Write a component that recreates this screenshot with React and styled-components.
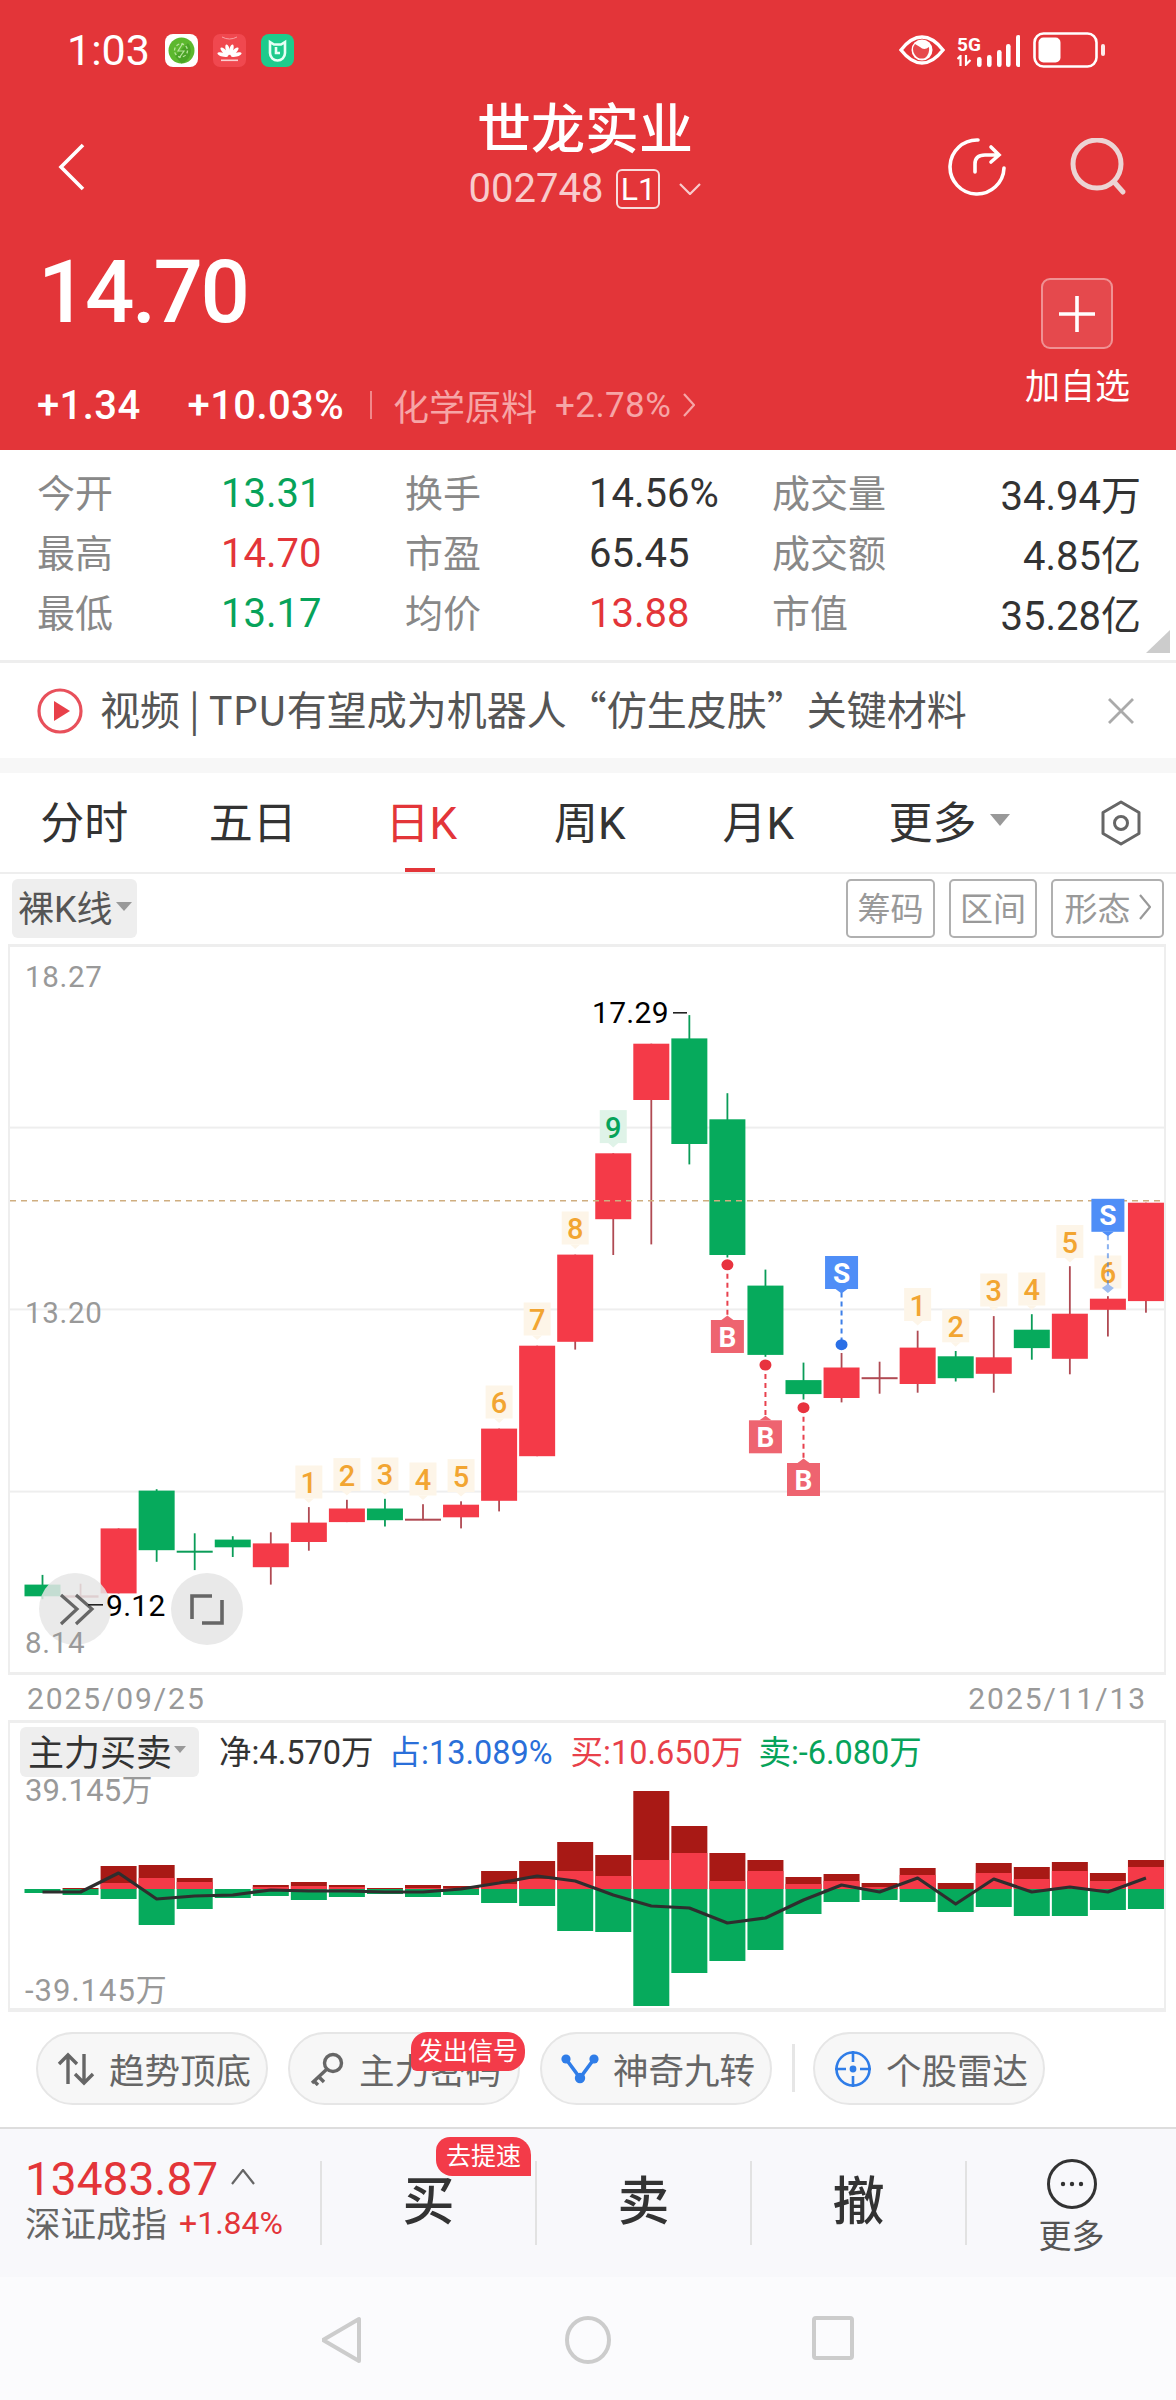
import React from 'react'
import styled, { createGlobalStyle } from 'styled-components'

const RED = '#e33539'
const GREEN = '#07a35a'
const CANDLE_RED = '#f43a48'
const CANDLE_GREEN = '#06aa5c'
const FONT = 'Roboto, "Noto Sans CJK SC", sans-serif'
const CJK_FIRST = '"Noto Sans CJK SC", Roboto, sans-serif'

const GlobalStyle = createGlobalStyle`
  html, body {
    margin: 0;
    padding: 0;
    background: #fff;
    font-family: ${FONT};
  }
  * { box-sizing: border-box; }
`

const Page = styled.div`
  width: 1176px;
  height: 2400px;
  background: #fff;
  overflow: hidden;
  color: #333;
`

/* red header */
const Header = styled.header`
  height: 450px;
  background: ${RED};
  color: #fff;
`

const StatusBar = styled.div`
  height: 100px;
  display: flex;
  align-items: center;
  padding: 0 71px 0 67px;
`

const Clock = styled.span`
  font-size: 43px;
  line-height: 42px;
  width: 98px;
`

const StatusApps = styled.div`
  display: flex;
  gap: 15px;
`

const StatusRight = styled.div`
  margin-left: auto;
  display: flex;
  align-items: center;
`

const NetLabel = styled.div`
  display: flex;
  flex-direction: column;
  width: 18px;
  margin-left: 12px;
`

const NetText = styled.span`
  font-size: 19px;
  line-height: 20px;
  font-weight: 700;
  white-space: nowrap;
`

const BarsSlot = styled.div`
  display: flex;
  margin-right: 13px;
`

const NavRow = styled.div`
  height: 130px;
  display: grid;
  grid-template-columns: 300px 1fr 300px;
  align-items: center;
`

const BackButton = styled.div`
  padding-left: 58px;
  display: flex;
  padding-top: 2px;
`

const TitleBlock = styled.div`
  display: flex;
  flex-direction: column;
  align-items: center;
  padding: 0 6px 20px 0;
`

const Title = styled.div`
  font-size: 54px;
  line-height: 62px;
  font-weight: 500;
`

const CodeRow = styled.div`
  display: flex;
  align-items: center;
  margin-top: 5px;
  color: #f8cbcc;
  font-size: 40px;
  line-height: 44px;
  gap: 13px;
`

const LevelBox = styled.span`
  border: 2px solid #f8dcdc;
  border-radius: 6px;
  font-size: 32px;
  line-height: 36px;
  height: 40px;
  width: 44px;
  margin-right: 6px;
  text-align: center;
  color: #fff;
`

const NavIcons = styled.div`
  display: flex;
  justify-content: flex-end;
  gap: 64px;
  padding-right: 48px;
  padding-top: 2px;
`

const QuoteRow = styled.div`
  height: 220px;
  display: flex;
  justify-content: space-between;
  padding: 0 46px 0 37px;
`

const QuoteLeft = styled.div`
  display: flex;
  flex-direction: column;
`

const Price = styled.div`
  font-size: 87px;
  line-height: 90px;
  font-weight: 500;
  letter-spacing: -2.5px;
  margin: 17px 0 0 1px;
`

const ChangeRow = styled.div`
  display: flex;
  align-items: center;
  margin-top: 50px;
  height: 36px;
`

const ChangeValue = styled.span`
  font-size: 40px;
  font-weight: 500;
  letter-spacing: 0.4px;
  margin-right: ${p => p.$gap}px;
`

const ChangeSplit = styled.span`
  width: 2px;
  height: 28px;
  margin: 0 21px 0 26px;
  background: #f1888a;
`

const SectorName = styled.span`
  font-size: 36px;
  color: #f6a5a6;
`

const SectorChange = styled.span`
  font-size: 35px;
  letter-spacing: 0.4px;
  color: #f6a5a6;
  margin: 0 12px 0 18px;
`

const AddColumn = styled.div`
  display: flex;
  flex-direction: column;
  align-items: center;
  padding-top: 48px;
`

const AddBox = styled.div`
  width: 72px;
  height: 71px;
  border: 2px solid rgba(255, 255, 255, 0.4);
  border-radius: 9px;
  background: rgba(255, 255, 255, 0.1);
  display: flex;
  align-items: center;
  justify-content: center;
`

const AddLabel = styled.div`
  margin-top: 19px;
  font-size: 35px;
  line-height: 40px;
`

/* quote table */
const Stats = styled.section`
  position: relative;
  height: 213px;
  padding: 13px 35px 0 37px;
  border-bottom: 3px solid #eee;
  display: grid;
  grid-template-columns: 184px 184px 184px 183px auto 1fr;
  grid-auto-rows: 60px;
  align-items: center;
`

const StatLabel = styled.span`
  font-size: 38px;
  padding-bottom: 6px;
  color: #888;
`

const StatValue = styled.span`
  font-size: 40px;
  color: ${p => p.$color || '#333'};
  justify-self: ${p => (p.$end ? 'end' : 'start')};
`

const CornerMark = styled.i`
  position: absolute;
  right: 6px;
  bottom: 7px;
  width: 24px;
  height: 23px;
  background: #ccc;
  clip-path: polygon(100% 0, 100% 100%, 0 100%);
`

/* news strip */
const News = styled.div`
  height: 95px;
  display: flex;
  align-items: center;
  padding: 0 41px 0 37px;
`

const NewsText = styled.span`
  margin: 0 0 5px 17px;
  font-family: ${CJK_FIRST};
  font-size: 40px;
  line-height: 48px;
  color: #555;
  white-space: nowrap;
`

const NewsClose = styled.span`
  margin-left: auto;
  display: flex;
`

const Gap = styled.div`
  height: 15px;
  background: #f7f7f7;
`

/* period tabs */
const Tabs = styled.nav`
  height: 101px;
  display: flex;
  align-items: center;
  border-bottom: 2px solid #eee;
`

const Tab = styled.div`
  position: relative;
  width: 168.5px;
  height: 100%;
  display: flex;
  align-items: center;
  justify-content: ${p => (p.$more ? 'flex-start' : 'center')};
  padding: 0 0 5px ${p => (p.$more ? '46px' : '0')};
  font-size: 44px;
  color: ${p => (p.$active ? RED : '#333')};

  ${p => p.$active && `
    &::after {
      content: '';
      position: absolute;
      left: 68px;
      bottom: 0;
      width: 30px;
      height: 4px;
      background: ${RED};
    }
  `}
`

const Caret = styled.i`
  display: inline-block;
  width: 0;
  height: 0;
  margin-left: ${p => p.$gap || 4}px;
  border-left: ${p => p.$size}px solid transparent;
  border-right: ${p => p.$size}px solid transparent;
  border-top: ${p => p.$size * 1.2}px solid #999;
`

const SettingsIcon = styled.div`
  margin-left: auto;
  margin-right: 34px;
  display: flex;
`

/* chart toolbar */
const ToolRow = styled.div`
  height: 70px;
  padding: 5px 12px 0;
  display: flex;
  gap: 14px;
`

const TypeChip = styled.div`
  display: flex;
  align-items: center;
  height: 59px;
  padding: 0 5px 5px 6px;
  margin-right: auto;
  background: #eee;
  border-radius: 6px;
  font-size: 36px;
  color: #555;
`

const ToolButton = styled.div`
  height: 59px;
  width: ${p => p.$w}px;
  display: flex;
  align-items: center;
  justify-content: center;
  gap: 8px;
  padding-bottom: 3px;
  border: 2px solid #b0b0b0;
  border-radius: 5px;
  font-size: 33px;
  color: #999;
`

const Frame = styled.div`
  margin-left: 8px;
  width: 1158px;
  border-left: 2px solid #eee;
  border-right: 2px solid #eee;
  border-top: 3px solid #eee;
  border-bottom: ${p => (p.$thick ? '4px' : '3px')} solid #eee;
`

const ChartSvg = styled.svg`
  display: block;
`

const AxisLabel = styled.text`
  font-family: ${FONT};
  font-size: 29.5px;
  fill: #999;
  letter-spacing: 0.7px;
`

const ExtremeLabel = styled.text`
  font-family: ${FONT};
  font-size: 30px;
  fill: #000;
  letter-spacing: 0.3px;
`

const TagText = styled.text`
  font-family: ${FONT};
  font-size: ${p => p.$size || 29}px;
  font-weight: ${p => p.$weight || 500};
  fill: ${p => p.$color};
  text-anchor: middle;
`

const DateRow = styled.div`
  height: 45px;
  display: flex;
  justify-content: space-between;
  align-items: center;
  padding: 1px 29px 0 27px;
  font-size: 30px;
  letter-spacing: 1.9px;
  color: #999;
`

/* indicator */
const IndicatorHead = styled.div`
  height: 55px;
  padding: 3px 0 0 10px;
  display: flex;
  align-items: center;
`

const IndicatorChip = styled.div`
  display: flex;
  align-items: center;
  height: 50px;
  width: 179px;
  padding: 0 0 5px 8px;
  margin-right: 20px;
  background: #eee;
  border-radius: 6px;
  font-size: 36px;
  color: #333;
`

const IndicatorValue = styled.span`
  font-size: 32.5px;
  padding-bottom: 5px;
  color: ${p => p.$color};
  margin-right: ${p => p.$gap}px;
  white-space: nowrap;
`

const FlowWrap = styled.div`
  position: relative;
`

const FlowAxis = styled.span`
  position: absolute;
  left: 15px;
  top: ${p => p.$top}px;
  font-size: 31px;
  line-height: 32px;
  letter-spacing: ${p => p.$track}px;
  color: #999;
`

/* feature pills */
const PillRow = styled.div`
  height: 115px;
  padding: 20px 0 0 36px;
  display: flex;
  align-items: flex-start;
  gap: 20px;
`

const Pill = styled.div`
  position: relative;
  width: 232px;
  height: 73px;
  display: flex;
  align-items: center;
  padding-left: 19px;
  gap: 14px;
  border: 2px solid #e6e6e6;
  border-radius: 37px;
  background: #f7f7f7;
  font-size: 35.5px;
  color: #666;
  white-space: nowrap;
`

const PillSplit = styled.i`
  width: 3px;
  height: 48px;
  margin: 12px -2px 0 0;
  background: #e6e6e6;
`

const Badge = styled.span`
  position: absolute;
  display: flex;
  align-items: center;
  justify-content: center;
  width: ${p => p.$w}px;
  height: 39px;
  font-size: 25px;
  line-height: 30px;
  font-weight: 400;
  color: #fff;
  background: #f33b49;
`

const SignalBadge = styled(Badge)`
  top: -2px;
  right: -7px;
  border-radius: 16px 18px 18px 6px;
`

const SpeedBadge = styled(Badge)`
  top: -24px;
  left: 114px;
  border-radius: 14px 18px 0 16px;
`

/* bottom trade bar */
const TradeBar = styled.div`
  height: 150px;
  display: flex;
  align-items: flex-start;
  padding-top: 32px;
  background: #f8f8fb;
  border-top: 2px solid #ddd;
`

const IndexBlock = styled.div`
  width: 320px;
  padding-left: 25px;
`

const IndexPrice = styled.div`
  display: flex;
  align-items: flex-start;
  gap: 13px;
  height: 44px;
  margin-top: -4px;
  font-size: 46px;
  line-height: 44px;
  color: ${RED};
`

const CaretSlot = styled.span`
  display: flex;
  margin-top: 12px;
`

const IndexName = styled.div`
  display: flex;
  align-items: center;
  margin-top: 0;
  height: 44px;
`

const IndexLabel = styled.span`
  font-size: 35.5px;
  color: #666;
  margin-right: 12px;
  padding-bottom: 3px;
`

const IndexPct = styled.span`
  font-size: 32px;
  color: ${RED};
`

const ActionCell = styled.div`
  position: relative;
  width: ${p => p.$w || 215}px;
  height: 84px;
  display: flex;
  flex-direction: column;
  align-items: center;
  justify-content: center;
  border-left: 2px solid #e2e2e2;
  font-size: 52px;
  line-height: 56px;
  font-weight: 500;
  color: #333;
`

const MoreCell = styled(ActionCell)`
  padding-top: 6px;
`

const MoreGlyph = styled.svg`
  flex: none;
`

const MoreLabel = styled.span`
  flex: none;
  margin-top: 12px;
  font-size: 33px;
  line-height: 32px;
  font-weight: 400;
  color: #555;
`

const SystemNav = styled.div`
  height: 123px;
  background: #fbfbfd;
  display: grid;
  grid-template-columns: repeat(3, 245px);
  justify-content: center;
  justify-items: center;
  padding-top: 39px;
`

const PITCH = 38.05
const cx = i => 42.5 + PITCH * i

// kind, body top, body bottom, wick top, wick bottom
const CANDLES = [
  ['g', 1584.6, 1596.3, 1574.9, 1599.2],
  ['r', 1595.3, 1597.7, 1583.7, 1599.2],
  ['r', 1528.4, 1593.4, 1528.4, 1593.4],
  ['g', 1490.6, 1550.2, 1489.2, 1561.8],
  ['g', 1550.7, 1551.7, 1533.3, 1570.1],
  ['g', 1539.6, 1547.3, 1536.2, 1557],
  ['r', 1543.4, 1567.2, 1532.3, 1584.6],
  ['r', 1522.6, 1542, 1507.1, 1550.7],
  ['r', 1508.5, 1522.1, 1499.8, 1522.1],
  ['g', 1508.5, 1520.2, 1498.8, 1526.5],
  ['r', 1518.7, 1520.2, 1504.2, 1520.2],
  ['r', 1504.7, 1517.3, 1501.3, 1528.4],
  ['r', 1428.6, 1500.8, 1428.6, 1511.4],
  ['r', 1345.7, 1456.2, 1345.7, 1456.2],
  ['r', 1254.6, 1341.8, 1254.6, 1349.6],
  ['r', 1153.3, 1219.2, 1153.3, 1255],
  ['r', 1043.7, 1100, 1043.7, 1244.4],
  ['g', 1038.4, 1144, 1015.1, 1164.4],
  ['g', 1119.3, 1255, 1093.2, 1257.5],
  ['g', 1285.6, 1354.9, 1269.6, 1356.8],
  ['g', 1380.1, 1394.1, 1362.6, 1399.5],
  ['r', 1367.5, 1398, 1353, 1402.4],
  ['r', 1377.2, 1378.6, 1361.7, 1393.7],
  ['r', 1347.6, 1384, 1330.7, 1392.7],
  ['g', 1356.3, 1378.2, 1351, 1381.5],
  ['r', 1357.3, 1373.8, 1316.1, 1392.7],
  ['g', 1329.7, 1348.1, 1314.2, 1359.7],
  ['r', 1313.7, 1358.8, 1266.2, 1374.3],
  ['r', 1298.7, 1309.8, 1296.2, 1336.5],
  ['r', 1202.7, 1301.1, 1202.7, 1312.7],
]

// index into CANDLES, label, center y
const NINE_TURN = [
  [7, '1', 1482], [8, '2', 1474.6], [9, '3', 1474], [10, '4', 1479], [11, '5', 1475.6],
  [12, '6', 1402], [13, '7', 1319], [14, '8', 1228],
  [23, '1', 1304.5], [24, '2', 1325.8], [25, '3', 1290], [26, '4', 1289], [27, '5', 1241.5], [28, '6', 1272],
]

// dark red top, light red top, green bottom
const FLOWS = [
  [0, 0, 4], [1, 0, 6], [23, 6, 10], [24, 11, 36], [11, 7, 20], [0, 0, 9], [4, 2, 7], [7, 3, 11],
  [4, 2, 8], [1, 0, 5], [4, 1, 8], [3, 1, 6], [18, 5, 14], [28, 10, 17], [47, 18, 42], [34, 13, 43],
  [98, 29, 117], [63, 36, 84], [36, 8, 72], [29, 18, 61], [12, 5, 25], [15, 8, 13], [6, 2, 11],
  [21, 14, 13], [6, 0, 23], [26, 16, 18], [22, 10, 27], [27, 18, 27], [16, 8, 21], [29, 22, 20],
]

const NET_LINE = [3, 3, -16, 10, 7, 6, 1, 2, 2, 3, 3, 0, -6, -13, -8, 6, 17, 19, 34, 29, 11, -4, 3, -11, 15, -10, 3, -2, 3, -11]

const Candle = ({ i, data }) => {
  const [kind, top, bot, wTop, wBot] = data
  const x = cx(i)
  const thin = bot - top < 3
  const body = kind === 'r' ? CANDLE_RED : CANDLE_GREEN
  const wick = kind === 'r' ? '#b04a53' : '#0a9c58'
  return (
    <g>
      <rect x={x - 0.9} y={wTop} width={1.8} height={wBot - wTop} fill={wick} />
      <rect x={x - 18} y={top} width={36} height={Math.max(bot - top, 2)} fill={thin ? wick : body} />
    </g>
  )
}

const NumberTag = ({ x, y, label, green }) => (
  <g>
    <rect x={x - 13.5} y={y - 16.5} width={27} height={33} fill={green ? '#dff3e8' : '#fdf5e8'} />
    <polygon points={`${x - 5},${y + 16.5} ${x + 5},${y + 16.5} ${x},${y + 21}`} fill={green ? '#dff3e8' : '#fdf5e8'} />
    <TagText x={x} y={y + 11} $color={green ? GREEN : '#f2a532'}>{label}</TagText>
  </g>
)

const BuyMark = ({ x, dotY, tagY }) => (
  <g>
    <line x1={x} x2={x} y1={dotY} y2={tagY - 21} stroke="#e8414e" strokeWidth="2" strokeDasharray="5 4" />
    <ellipse cx={x} cy={dotY} rx={6} ry={5.5} fill="#e8333f" />
    <rect x={x - 16.5} y={tagY - 16.5} width={33} height={33} fill="#ee6470" />
    <polygon points={`${x - 6},${tagY - 16.5} ${x + 6},${tagY - 16.5} ${x},${tagY - 21}`} fill="#ee6470" />
    <TagText x={x} y={tagY + 10} $color="#fff" $size={28} $weight={700}>B</TagText>
  </g>
)

const SellMark = ({ x, tagY, dotY, faint }) => (
  <g>
    <line x1={x} x2={x} y1={tagY + 20} y2={dotY} stroke="#3d7fe8" strokeWidth="2" strokeDasharray="5 4" opacity={faint ? 0.6 : 1} />
    {!faint && <ellipse cx={x} cy={dotY} rx={6} ry={5.5} fill="#2a6fe6" />}
    <rect x={x - 16.5} y={tagY - 16.5} width={33} height={33} fill="#4f8ef7" />
    <polygon points={`${x - 6},${tagY + 16.5} ${x + 6},${tagY + 16.5} ${x},${tagY + 21}`} fill="#4f8ef7" />
    <TagText x={x} y={tagY + 10} $color="#fff" $size={28} $weight={700}>S</TagText>
  </g>
)

const KChart = () => (
  <ChartSvg width="1154" height="725" viewBox="10 947 1154 725">
    {[1127.6, 1309.4, 1491.6].map(y => (
      <rect key={y} x="10" y={y - 1} width="1154" height="2" fill="#eee" />
    ))}
    <AxisLabel x="25" y="987">18.27</AxisLabel>
    <AxisLabel x="25" y="1323">13.20</AxisLabel>
    {CANDLES.map((c, i) => <Candle key={i} i={i} data={c} />)}
    <line x1="10" x2="1164" y1="1200.8" y2="1200.8" stroke="#cfae80" strokeWidth="1.5" strokeDasharray="6 5" />
    {NINE_TURN.map(([i, label, y]) => <NumberTag key={`${i}-${label}`} x={cx(i)} y={y} label={label} />)}
    <NumberTag x={cx(15)} y={1126.6} label="9" green />
    <BuyMark x={cx(18)} dotY={1264.8} tagY={1336.5} />
    <BuyMark x={cx(19)} dotY={1365} tagY={1436.8} />
    <BuyMark x={cx(20)} dotY={1407.7} tagY={1479.5} />
    <SellMark x={cx(21)} tagY={1272.5} dotY={1344.7} />
    <SellMark x={cx(28)} tagY={1215.3} dotY={1288} faint />
    <polygon points={`${cx(28) - 6},1288 ${cx(28)},1284 ${cx(28) + 6},1288 ${cx(28)},1293`} fill="#9dbdf0" />
    <ExtremeLabel x="592" y="1022.5">17.29</ExtremeLabel>
    <rect x="673" y="1012" width="14" height="1.6" fill="#222" />
    <circle cx="75" cy="1609" r="36" fill="#e6e6e6" fillOpacity="0.85" />
    <circle cx="207" cy="1609" r="36" fill="#e9e9e9" />
    <path d="M61 1595 L77 1609 L61 1624 M76 1595 L92 1609 L76 1624" fill="none" stroke="#666" strokeWidth="3.2" />
    <path d="M192 1619 V1596 H212 M222 1600 V1623 H202" fill="none" stroke="#666" strokeWidth="3.6" />
    <rect x="88" y="1604" width="15" height="1.6" fill="#222" />
    <ExtremeLabel x="106" y="1616">9.12</ExtremeLabel>
    <AxisLabel x="25" y="1653">8.14</AxisLabel>
  </ChartSvg>
)

const ZERO = 1889

const FlowChart = () => {
  const points = NET_LINE.map((v, i) => `${cx(i)},${ZERO + v}`).join(' ')
  return (
    <ChartSvg width="1154" height="230" viewBox="10 1778 1154 230">
      {FLOWS.map(([dark, light, green], i) => (
        <g key={i}>
          <rect x={cx(i) - 18} y={ZERO} width="36" height={green} fill={CANDLE_GREEN} />
          <rect x={cx(i) - 18} y={ZERO - dark} width="36" height={dark} fill="#a81915" />
          <rect x={cx(i) - 18} y={ZERO - light} width="36" height={light} fill={CANDLE_RED} />
        </g>
      ))}
      <polyline points={points} fill="none" stroke="#2e2e2e" strokeWidth="3.2" strokeLinejoin="round" />
    </ChartSvg>
  )
}

const GreenApp = () => (
  <svg width="33" height="33" viewBox="0 0 33 33">
    <rect width="33" height="33" rx="8" fill="#fff" />
    <circle cx="16.5" cy="16.5" r="13" fill="#5cb82e" />
    <path d="M10 22 L23 9 A13 13 0 0 1 16.5 29.5 Z" fill="#4aa326" />
    <circle cx="16" cy="16.5" r="6.5" fill="none" stroke="#b6e39a" strokeWidth="1.3" strokeDasharray="3 2" />
    <path d="M18 9 L13 17 H19 L14 24" fill="none" stroke="#b6e39a" strokeWidth="1.2" />
  </svg>
)

const HuaweiApp = () => (
  <svg width="33" height="33" viewBox="0 0 33 33">
    <rect width="33" height="33" rx="7" fill="#f0484f" />
    <path d="M9 3 Q16.5 7 24 3" fill="none" stroke="#f8a0a3" strokeWidth="1" />
    <g fill="#fff">
      {[-75, -45, -15, 15, 45, 75].map(a => (
        <ellipse key={a} cx="16.5" cy="15.5" rx="2" ry="5.5" transform={`rotate(${a} 16.5 22.5)`} />
      ))}
    </g>
    <rect x="8" y="25.5" width="17" height="1.6" fill="#fbd0d2" />
  </svg>
)

const MiApp = () => (
  <svg width="33" height="33" viewBox="0 0 33 33">
    <rect width="33" height="33" rx="8" fill="#1ecb8c" />
    <path d="M9 8 L13 10.5 H20 L24 8 V19 A7.5 7.5 0 0 1 9 19 Z" fill="none" stroke="#e6fff5" strokeWidth="2.6" />
    <path d="M15 13 V19 H19" fill="none" stroke="#e6fff5" strokeWidth="2.6" />
  </svg>
)

const EyeIcon = () => (
  <svg width="46" height="30" viewBox="0 0 46 30">
    <path d="M2 15 Q12 2 23 2 Q34 2 44 15 Q34 28 23 28 Q12 28 2 15 Z" fill="none" stroke="#fff" strokeWidth="3.4" />
    <circle cx="23" cy="15" r="10.5" fill="#fff" />
    <path d="M16 9 A9 9 0 0 0 26 23 Q31 19 30 12 Q25 16 21 12 Z" fill={RED} opacity="0.9" />
  </svg>
)

const ArrowsMini = () => (
  <svg width="15" height="11" viewBox="0 0 15 11">
    <path d="M3.5 11 V1 L0.5 4" fill="none" stroke="#fff" strokeWidth="2.2" />
    <path d="M9 0 V9.5 L13.5 5" fill="none" stroke="#fff" strokeWidth="2.2" />
  </svg>
)

const SignalBars = () => (
  <svg width="45" height="34" viewBox="0 0 45 34">
    {[[2, 24, 10], [12, 22, 12], [22, 17, 17], [31, 11, 23], [41, 2, 32]].map(([x, y, h]) => (
      <rect key={x} x={x} y={y} width="4.6" height={h} rx="2.2" fill="#fff" />
    ))}
  </svg>
)

const Battery = () => (
  <svg width="72" height="36" viewBox="0 0 72 36">
    <rect x="1.5" y="1.5" width="62" height="33" rx="9" fill="none" stroke="#fff" strokeWidth="2.6" />
    <rect x="5.5" y="5.5" width="22" height="25" rx="5" fill="#fff" />
    <rect x="68" y="12" width="4" height="12" rx="2" fill="#fff" opacity="0.9" />
  </svg>
)

const Back = () => (
  <svg width="28" height="48" viewBox="0 0 28 48">
    <path d="M25 2 L3 24 L25 46" fill="none" stroke="#fff" strokeWidth="3.6" />
  </svg>
)

const Chevron = ({ w = 22, h = 12, color = '#f8cbcc', dir = 'down' }) => {
  const d = {
    down: `M1 1 L${w / 2} ${h - 1} L${w - 1} 1`,
    up: `M1 ${h - 1} L${w / 2} 1 L${w - 1} ${h - 1}`,
    right: `M1 1 L${w - 1} ${h / 2} L1 ${h - 1}`,
  }[dir]
  return (
    <svg width={w} height={h} viewBox={`0 0 ${w} ${h}`}>
      <path d={d} fill="none" stroke={color} strokeWidth="2.2" />
    </svg>
  )
}

const ShareIcon = () => (
  <svg width="58" height="58" viewBox="0 0 58 58">
    <path d="M30 2 A27 27 0 1 0 56 30" fill="none" stroke="#fff" strokeWidth="3.6" strokeLinecap="round" />
    <path d="M27 34 V26 Q27 17 37 17 H49 M43 9 L51 17 L43 24" fill="none" stroke="#fff" strokeWidth="3.6" strokeLinecap="round" />
  </svg>
)

const SearchIcon = () => (
  <svg width="58" height="58" viewBox="0 0 58 58">
    <circle cx="27" cy="26" r="24" fill="none" stroke="#ecd4d4" strokeWidth="5" />
    <path d="M45 45 L53 54" stroke="#ecd4d4" strokeWidth="5" strokeLinecap="round" />
  </svg>
)

const PlayIcon = () => (
  <svg width="46" height="46" viewBox="0 0 46 46">
    <circle cx="23" cy="23" r="21" fill="none" stroke="#e8505b" strokeWidth="3.2" />
    <path d="M17 13 L33 23 L17 33 Z" fill="#e8404a" />
  </svg>
)

const CloseIcon = () => (
  <svg width="28" height="28" viewBox="0 0 28 28">
    <path d="M2 2 L26 26 M26 2 L2 26" stroke="#aaa" strokeWidth="2.8" />
  </svg>
)

const HexIcon = () => (
  <svg width="42" height="46" viewBox="0 0 42 46">
    <path d="M21 2 L39 12.5 V33.5 L21 44 L3 33.5 V12.5 Z" fill="none" stroke="#666" strokeWidth="3" strokeLinejoin="round" />
    <circle cx="21" cy="23" r="6.5" fill="none" stroke="#666" strokeWidth="3" />
  </svg>
)

const TrendIcon = () => (
  <svg width="38" height="34" viewBox="0 0 38 34">
    <path d="M11 32 V3 M2 12 L11 3 L20 12" fill="none" stroke="#666" strokeWidth="3.4" />
    <path d="M27 2 V31 M18 22 L27 31 L36 22" fill="none" stroke="#666" strokeWidth="3.4" />
  </svg>
)

const KeyIcon = () => (
  <svg width="36" height="34" viewBox="0 0 36 34">
    <circle cx="24" cy="11" r="8.5" fill="none" stroke="#666" strokeWidth="3.4" />
    <path d="M18 17 L3 31 M10 25 L15 30 M5 29 L9 33" fill="none" stroke="#666" strokeWidth="3.4" />
  </svg>
)

const NineIcon = () => (
  <svg width="38" height="32" viewBox="0 0 38 32">
    <path d="M5 6 L19 25 L33 6" fill="none" stroke="#2f7de8" strokeWidth="3.6" />
    <circle cx="5" cy="6" r="4.6" fill="#2f7de8" />
    <circle cx="33" cy="6" r="4.6" fill="#2f7de8" />
    <circle cx="19" cy="25" r="5.2" fill="#2f7de8" />
  </svg>
)

const RadarIcon = () => (
  <svg width="38" height="38" viewBox="0 0 38 38">
    <circle cx="19" cy="19" r="16.5" fill="none" stroke="#2f7de8" strokeWidth="2.6" />
    <path d="M19 1 V12 M19 26 V37 M1 19 H12 M26 19 H37" stroke="#2f7de8" strokeWidth="2.6" />
    <circle cx="19" cy="19" r="3.4" fill="#2f7de8" />
  </svg>
)

const MoreIcon = () => (
  <MoreGlyph width="50" height="50" viewBox="0 0 50 50">
    <circle cx="25" cy="25" r="23.5" fill="none" stroke="#333" strokeWidth="3" />
    <circle cx="16" cy="25" r="2.2" fill="#333" />
    <circle cx="25" cy="25" r="2.2" fill="#333" />
    <circle cx="34" cy="25" r="2.2" fill="#333" />
  </MoreGlyph>
)

const STATS = [
  ['今开', '13.31', GREEN, '换手', '14.56%', null, '成交量', '34.94万'],
  ['最高', '14.70', RED, '市盈', '65.45', null, '成交额', '4.85亿'],
  ['最低', '13.17', GREEN, '均价', '13.88', RED, '市值', '35.28亿'],
]

const PERIODS = ['分时', '五日', '日K', '周K', '月K']

export default function App() {
  return (
    <Page>
      <GlobalStyle />
      <Header>
        <StatusBar>
          <Clock>1:03</Clock>
          <StatusApps>
            <GreenApp />
            <HuaweiApp />
            <MiApp />
          </StatusApps>
          <StatusRight>
            <EyeIcon />
            <NetLabel>
              <NetText>5G</NetText>
              <ArrowsMini />
            </NetLabel>
            <BarsSlot><SignalBars /></BarsSlot>
            <Battery />
          </StatusRight>
        </StatusBar>

        <NavRow>
          <BackButton><Back /></BackButton>
          <TitleBlock>
            <Title>世龙实业</Title>
            <CodeRow>
              002748
              <LevelBox>L1</LevelBox>
              <Chevron />
            </CodeRow>
          </TitleBlock>
          <NavIcons>
            <ShareIcon />
            <SearchIcon />
          </NavIcons>
        </NavRow>

        <QuoteRow>
          <QuoteLeft>
            <Price>14.70</Price>
            <ChangeRow>
              <ChangeValue $gap={47}>+1.34</ChangeValue>
              <ChangeValue $gap={0}>+10.03%</ChangeValue>
              <ChangeSplit />
              <SectorName>化学原料</SectorName>
              <SectorChange>+2.78%</SectorChange>
              <Chevron w={12} h={24} dir="right" color="#f6a5a6" />
            </ChangeRow>
          </QuoteLeft>
          <AddColumn>
            <AddBox>
              <svg width="36" height="36" viewBox="0 0 36 36">
                <path d="M18 0 V36 M0 18 H36" stroke="#fff" strokeWidth="3.6" />
              </svg>
            </AddBox>
            <AddLabel>加自选</AddLabel>
          </AddColumn>
        </QuoteRow>
      </Header>

      <Stats>
        {STATS.map(row => (
          <React.Fragment key={row[0]}>
            <StatLabel>{row[0]}</StatLabel>
            <StatValue $color={row[2]}>{row[1]}</StatValue>
            <StatLabel>{row[3]}</StatLabel>
            <StatValue $color={row[5]}>{row[4]}</StatValue>
            <StatLabel>{row[6]}</StatLabel>
            <StatValue $end>{row[7]}</StatValue>
          </React.Fragment>
        ))}
        <CornerMark />
      </Stats>

      <News>
        <PlayIcon />
        <NewsText>视频 | TPU有望成为机器人“仿生皮肤”关键材料</NewsText>
        <NewsClose><CloseIcon /></NewsClose>
      </News>
      <Gap />

      <Tabs>
        {PERIODS.map(p => <Tab key={p} $active={p === '日K'}>{p}</Tab>)}
        <Tab $more>更多<Caret $size={10} $gap={13} /></Tab>
        <SettingsIcon><HexIcon /></SettingsIcon>
      </Tabs>

      <ToolRow>
        <TypeChip>裸K线<Caret $size={8} $gap={3} /></TypeChip>
        <ToolButton $w={89}>筹码</ToolButton>
        <ToolButton $w={88}>区间</ToolButton>
        <ToolButton $w={113}>形态<Chevron w={12} h={26} dir="right" color="#999" /></ToolButton>
      </ToolRow>

      <Frame>
        <KChart />
      </Frame>
      <DateRow>
        <span>2025/09/25</span>
        <span>2025/11/13</span>
      </DateRow>

      <Frame $thick>
        <IndicatorHead>
          <IndicatorChip>主力买卖<Caret $size={6} $gap={2} /></IndicatorChip>
          <IndicatorValue $color="#333" $gap={15}>净:4.570万</IndicatorValue>
          <IndicatorValue $color="#2a6fd9" $gap={18}>占:13.089%</IndicatorValue>
          <IndicatorValue $color="#e8404a" $gap={15}>买:10.650万</IndicatorValue>
          <IndicatorValue $color={GREEN} $gap={0}>卖:-6.080万</IndicatorValue>
        </IndicatorHead>
        <FlowWrap>
          <FlowChart />
          <FlowAxis $top={-3} $track={0.2}>39.145万</FlowAxis>
          <FlowAxis $top={197} $track={1}>-39.145万</FlowAxis>
        </FlowWrap>
      </Frame>

      <PillRow>
        <Pill><TrendIcon />趋势顶底</Pill>
        <Pill>
          <KeyIcon />主力密码
          <SignalBadge $w={114}>发出信号</SignalBadge>
        </Pill>
        <Pill><NineIcon />神奇九转</Pill>
        <PillSplit />
        <Pill><RadarIcon />个股雷达</Pill>
      </PillRow>

      <TradeBar>
        <IndexBlock>
          <IndexPrice>
            13483.87
            <CaretSlot><Chevron w={24} h={16} dir="up" color="#666" /></CaretSlot>
          </IndexPrice>
          <IndexName>
            <IndexLabel>深证成指</IndexLabel>
            <IndexPct>+1.84%</IndexPct>
          </IndexName>
        </IndexBlock>
        <ActionCell>
          买
          <SpeedBadge $w={95}>去提速</SpeedBadge>
        </ActionCell>
        <ActionCell>卖</ActionCell>
        <ActionCell>撤</ActionCell>
        <MoreCell $w={211}>
          <MoreIcon />
          <MoreLabel>更多</MoreLabel>
        </MoreCell>
      </TradeBar>

      <SystemNav>
        <svg width="42" height="48" viewBox="0 0 42 48">
          <path d="M37 3 V45 L1 24 Z" fill="none" stroke="#ccc" strokeWidth="4" strokeLinejoin="round" />
        </svg>
        <svg width="46" height="48" viewBox="0 0 46 48">
          <ellipse cx="23" cy="24" rx="21" ry="22" fill="none" stroke="#ccc" strokeWidth="4" />
        </svg>
        <svg width="42" height="44" viewBox="0 0 42 44">
          <rect x="2" y="2" width="38" height="40" rx="2" fill="none" stroke="#ccc" strokeWidth="4" />
        </svg>
      </SystemNav>
    </Page>
  )
}
